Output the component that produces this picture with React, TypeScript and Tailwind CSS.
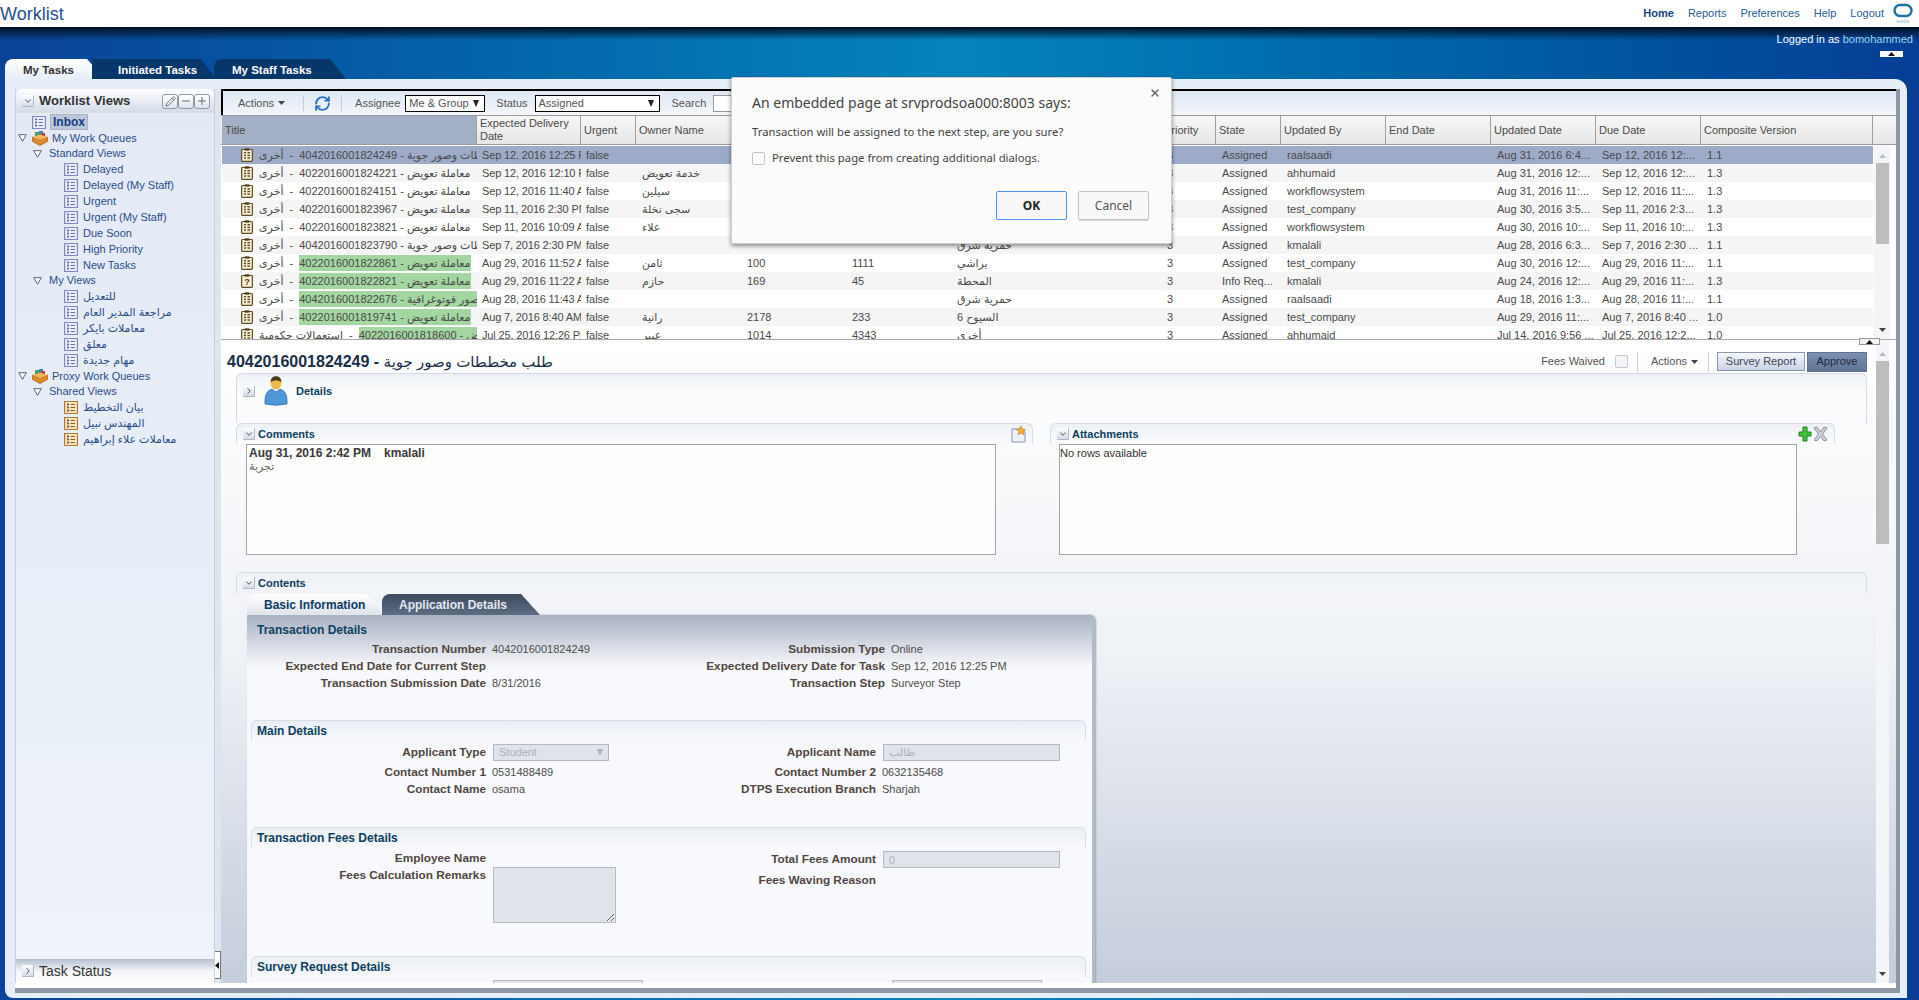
import { ChevronDown, ChevronRight, Minus, Pencil, Plus, RefreshCw, X } from 'lucide-react';

const ROW_GRID = 'grid grid-cols-[255px_104px_55px_105px_105px_105px_210px_55px_65px_105px_105px_105px_105px_172px]';
const SANS = "[font-family:'Liberation_Sans','DejaVu_Sans',sans-serif]";

const HEADERS = ['Title', 'Expected Delivery Date', 'Urgent', 'Owner Name', '', '', '', 'Priority', 'State', 'Updated By', 'End Date', 'Updated Date', 'Due Date', 'Composite Version'];

const OTHER = 'أخرى';
const COMP = 'معاملة تعويض';
const PLAN = 'طلب مخططات وصور جوية';

type Row = {
    type?: string;
    number: string;
    name: string;
    green?: boolean;
    help?: boolean;
    delivery: string;
    owner?: string;
    plot?: string;
    sector?: string;
    area?: string;
    state?: string;
    by: string;
    updated: string;
    due: string;
    version: string;
};

const ROWS: Row[] = [
    { number: '4042016001824249', name: PLAN, delivery: 'Sep 12, 2016 12:25 PM', by: 'raalsaadi', updated: 'Aug 31, 2016 6:4...', due: 'Sep 12, 2016 12:...', version: '1.1' },
    { number: '4022016001824221', name: COMP, delivery: 'Sep 12, 2016 12:10 PM', owner: 'خدمة تعويض', by: 'ahhumaid', updated: 'Aug 31, 2016 12:...', due: 'Sep 12, 2016 12:...', version: '1.3' },
    { number: '4022016001824151', name: COMP, delivery: 'Sep 12, 2016 11:40 AM', owner: 'سيلين', by: 'workflowsystem', updated: 'Aug 31, 2016 11:...', due: 'Sep 12, 2016 11:...', version: '1.3' },
    { number: '4022016001823967', name: COMP, delivery: 'Sep 11, 2016 2:30 PM', owner: 'سجى نخلة', by: 'test_company', updated: 'Aug 30, 2016 3:5...', due: 'Sep 11, 2016 2:3...', version: '1.3' },
    { number: '4022016001823821', name: COMP, delivery: 'Sep 11, 2016 10:09 AM', owner: 'علاء', by: 'workflowsystem', updated: 'Aug 30, 2016 10:...', due: 'Sep 11, 2016 10:...', version: '1.3' },
    { number: '4042016001823790', name: PLAN, delivery: 'Sep 7, 2016 2:30 PM', area: 'حمرية شرق', by: 'kmalali', updated: 'Aug 28, 2016 6:3...', due: 'Sep 7, 2016 2:30 ...', version: '1.1' },
    { number: '4022016001822861', name: COMP, green: true, delivery: 'Aug 29, 2016 11:52 AM', owner: 'ثامن', plot: '100', sector: '1111', area: 'براشي', by: 'test_company', updated: 'Aug 30, 2016 12:...', due: 'Aug 29, 2016 11:...', version: '1.1' },
    { number: '4022016001822821', name: COMP, green: true, help: true, delivery: 'Aug 29, 2016 11:22 AM', owner: 'حازم', plot: '169', sector: '45', area: 'المحطة', state: 'Info Req...', by: 'kmalali', updated: 'Aug 24, 2016 12:...', due: 'Aug 29, 2016 11:...', version: '1.3' },
    { number: '4042016001822676', name: 'صور فوتوغرافية', green: true, delivery: 'Aug 28, 2016 11:43 AM', area: 'حمرية شرق', by: 'raalsaadi', updated: 'Aug 18, 2016 1:3...', due: 'Aug 28, 2016 11:...', version: '1.1' },
    { number: '4022016001819741', name: COMP, green: true, delivery: 'Aug 7, 2016 8:40 AM', owner: 'رانية', plot: '2178', sector: '233', area: 'السيوح 6', by: 'test_company', updated: 'Aug 29, 2016 11:...', due: 'Aug 7, 2016 8:40 ...', version: '1.0' },
    { type: 'استعمالات حكومية', number: '4022016001818600', name: COMP, green: true, delivery: 'Jul 25, 2016 12:26 PM', owner: 'عبير', plot: '1014', sector: '4343', area: 'أخرى', by: 'ahhumaid', updated: 'Jul 14, 2016 9:56 ...', due: 'Jul 25, 2016 12:2...', version: '1.0' },
];

function ListIcon({ tan = false }: { tan?: boolean }) {
    const line = tan ? '#7a4a14' : '#5a5fa8';
    return (
        <svg width="14" height="13" viewBox="0 0 14 15" preserveAspectRatio="none" className="shrink-0">
            <rect x="0.6" y="0.6" width="12.8" height="13.8" fill={tan ? '#f8e6c6' : '#eef0fb'} stroke={tan ? '#b47a36' : '#8286c4'} strokeWidth="1.2" />
            {[4, 7.5, 11].map((y) => (
                <g key={y}>
                    <rect x="3" y={y - 1} width="2" height="2" fill={line} />
                    <line x1="6.5" x2="11" y1={y} y2={y} stroke={line} />
                </g>
            ))}
        </svg>
    );
}

function ClipIcon({ help = false }: { help?: boolean }) {
    return (
        <svg width="12" height="14" viewBox="0 0 13 16" preserveAspectRatio="none" className="shrink-0">
            <rect x="0.7" y="1.7" width="11.6" height="13.6" rx="1" fill="#f9f1d8" stroke="#5c4a1c" strokeWidth="1.3" />
            <rect x="4" y="0.4" width="5" height="2.6" fill="#4a3c18" />
            {help ? (
                <text x="6.5" y="13" textAnchor="middle" fontSize="10" fontWeight="700" fill="#5c3a10" fontFamily="Liberation Sans">?</text>
            ) : (
                [5.5, 8.5, 11.5].map((y) => (
                    <g key={y}>
                        <rect x="3.2" y={y - 0.8} width="2.2" height="1.6" fill="#5c4a1c" />
                        <rect x="7" y={y - 0.8} width="2.8" height="1.6" fill="#5c4a1c" />
                    </g>
                ))
            )}
        </svg>
    );
}

function QueueIcon() {
    return (
        <svg width="16" height="15" viewBox="0 0 16 15" className="shrink-0">
            <rect x="3" y="1" width="4" height="4" fill="#4aa34a" />
            <rect x="7" y="0" width="4" height="5" fill="#4a7bc0" />
            <rect x="10" y="2" width="3" height="4" fill="#c9382c" />
            <path d="M0.5 6 L8 9 L15.5 6 L15.5 10.5 L8 14.5 L0.5 10.5 Z" fill="#e08a2a" stroke="#a85c12" strokeWidth="0.7" />
            <path d="M0.5 6 L8 3.5 L15.5 6 L8 9 Z" fill="#f3b45c" />
        </svg>
    );
}

function TreeArrow() {
    return (
        <svg width="9" height="8" viewBox="0 0 9 8" className="shrink-0">
            <path d="M0.7 0.7 H8.3 L4.5 7.3 Z" fill="#fff" stroke="#5c6470" />
        </svg>
    );
}

function Disclosure({ open = true }: { open?: boolean }) {
    return (
        <span className="flex h-[12px] w-[12px] shrink-0 items-center justify-center rounded-[1px] border-b border-r border-[#aeb7c6] bg-gradient-to-b from-white to-[#d5dce8]">
            {open ? <ChevronDown size={10} strokeWidth={2} color="#333" /> : <ChevronRight size={10} strokeWidth={2} color="#333" />}
        </span>
    );
}

function PersonIcon() {
    return (
        <svg width="26" height="30" viewBox="0 0 26 30" className="shrink-0">
            <ellipse cx="13" cy="7" rx="5.5" ry="6.5" fill="#e9b94a" />
            <path d="M7.5 6 Q8 0.3 13 0.3 Q18 0.3 18.5 6 Q13 2.5 7.5 6 Z" fill="#4a3a1a" />
            <path d="M2 28 Q1 15 9 13 L13 16 L17 13 Q25 15 24 28 Q13 30.5 2 28 Z" fill="#4d97d8" stroke="#2d6aa8" strokeWidth="0.7" />
        </svg>
    );
}

function SelectBox({ label, className }: { label: string; className: string }) {
    return (
        <div className={`flex h-[17px] items-center justify-between border border-black bg-white pl-[3px] pr-[5px] ${className}`}>
            <span className="text-[#555]">{label}</span>
            <svg width="6" height="7" viewBox="0 0 6 7"><path d="M0 0 H6 L3 7 Z" fill="#222" /></svg>
        </div>
    );
}

function TreeItem({ label, tan = false }: { label: string; tan?: boolean }) {
    return (
        <div className="flex h-4 items-center gap-[5px] pl-[48px] text-[#2b4c86]">
            <ListIcon tan={tan} />
            <span>{label}</span>
        </div>
    );
}

function TreeGroup({ label, indent }: { label: string; indent: string }) {
    return (
        <div className={`flex h-[15px] items-center gap-[7px] text-[#2b4c86] ${indent}`}>
            <TreeArrow />
            <span>{label}</span>
        </div>
    );
}

function TreeQueue({ label }: { label: string }) {
    return (
        <div className="flex h-4 items-center pl-[2px] text-[#2b4c86]">
            <TreeArrow />
            <span className="ml-[5px]"><QueueIcon /></span>
            <span className="ml-[4px]">{label}</span>
        </div>
    );
}

function Sidebar() {
    return (
        <aside className="flex w-[200px] shrink-0 flex-col border-x border-[#c5cfde] bg-gradient-to-b from-[#e3eaf6] to-[#eef3f9]">
            <div className="flex h-[24px] shrink-0 items-center rounded-t-md bg-gradient-to-b from-white to-[#d3dbe7] pl-[6px] pr-[4px]">
                <Disclosure />
                <span className="ml-[5px] text-[13px] font-bold text-[#333]">Worklist Views</span>
                <div className="ml-auto flex">
                    {[Pencil, Minus, Plus].map((Icon, i) => (
                        <span key={i} className="flex h-[15px] w-[16px] items-center justify-center rounded-[3px] border border-[#8f98a6] bg-gradient-to-b from-white to-[#dfe4ec]">
                            <Icon size={i === 0 ? 11 : 12} strokeWidth={2} color="#667" />
                        </span>
                    ))}
                </div>
            </div>
            <div className="min-h-0 flex-1 pt-px text-[11px]">
                <div className="flex h-4 items-center pl-[16px]">
                    <ListIcon />
                    <span className="ml-[4px] border border-[#aab4c4] bg-[#bcc7d9] px-[2px] text-[12px] font-bold leading-[14px] text-[#173c84]">Inbox</span>
                </div>
                <TreeQueue label="My Work Queues" />
                <TreeGroup label="Standard Views" indent="pl-[17px]" />
                {['Delayed', 'Delayed (My Staff)', 'Urgent', 'Urgent (My Staff)', 'Due Soon', 'High Priority', 'New Tasks'].map((l) => <TreeItem key={l} label={l} />)}
                <TreeGroup label="My Views" indent="pl-[17px]" />
                {['للتعديل', 'مراجعة المدير العام', 'معاملات بايكر', 'معلق', 'مهام جديدة'].map((l) => <TreeItem key={l} label={l} />)}
                <TreeQueue label="Proxy Work Queues" />
                <TreeGroup label="Shared Views" indent="pl-[17px]" />
                {['بيان التخطيط', 'المهندس نبيل', 'معاملات علاء إبراهيم'].map((l) => <TreeItem key={l} label={l} tan />)}
            </div>
            <div className="flex h-[24px] shrink-0 items-center bg-gradient-to-b from-[#b4bfce] via-[#f3f5f8] to-white pl-[6px]">
                <Disclosure open={false} />
                <span className="ml-[5px] text-[14px] text-[#333]">Task Status</span>
            </div>
        </aside>
    );
}

function TaskRow({ row, index }: { row: Row; index: number }) {
    const bg = index === 0 ? 'bg-[#9dabc9]' : index % 2 === 1 ? 'bg-[#f5f5f5]' : 'bg-white';
    const values = [row.owner, row.plot, row.sector, row.area, '3', row.state ?? 'Assigned', row.by, '', row.updated, row.due, row.version];
    return (
        <div className={`${ROW_GRID} h-[18px] shrink-0 items-center text-[#4a4a4a] ${bg}`}>
            <div className="flex items-center overflow-hidden whitespace-nowrap pl-[19px]">
                {row.help ? <ClipIcon help /> : <ClipIcon />}
                <span className="ml-[6px] shrink-0">{row.type ?? OTHER}</span>
                <span className="mx-[6px] shrink-0">-</span>
                <span dir="ltr" className={`shrink-0 ${row.green ? 'bg-[#a3d6a0]' : ''}`}>{row.number} - {row.name}</span>
            </div>
            <div className="overflow-hidden whitespace-nowrap pl-[5px] tracking-[-0.15px]">{row.delivery}</div>
            <div className="pl-[5px]">false</div>
            {values.map((v, i) => (
                <div key={i} className="overflow-hidden whitespace-nowrap pl-[6px]">{v}</div>
            ))}
        </div>
    );
}

function TaskTable() {
    return (
        <section className="relative flex h-[251px] shrink-0 flex-col overflow-hidden border-b border-[#aaa] bg-white">
            <div className="flex h-[26px] shrink-0 items-center border-l-2 border-t-2 border-black bg-gradient-to-b from-[#dfe8f4] to-[#f3f6fa] pl-[15px] text-[#555]">
                <span>Actions</span>
                <svg width="7" height="4" viewBox="0 0 7 4" className="ml-[4px]"><path d="M0 0 H7 L3.5 4 Z" fill="#444" /></svg>
                <span className="ml-[18px] h-[16px] w-px bg-[#c4ccd8]" />
                <RefreshCw size={17} strokeWidth={2.6} color="#2f6fc4" className="ml-[10px]" />
                <span className="ml-[10px] h-[16px] w-px bg-[#c4ccd8]" />
                <span className="ml-[13px]">Assignee</span>
                <SelectBox label="Me & Group" className="ml-[5px] w-[80px]" />
                <span className="ml-[11px]">Status</span>
                <SelectBox label="Assigned" className="ml-[7px] w-[125px]" />
                <span className="ml-[12px]">Search</span>
                <div className="ml-[7px] h-[17px] w-[60px] border border-[#999] bg-white" />
            </div>
            <div className={`${ROW_GRID} h-[30px] shrink-0 border-y border-[#9a9a9a] bg-gradient-to-b from-[#f7f7f7] to-[#e6e6e6] pl-px text-[#4a4a4a]`}>
                {HEADERS.map((h, i) => (
                    <div key={i} className={`flex items-center overflow-hidden border-r border-[#a0a0a0] px-[3px] leading-[13px] ${i === 0 ? 'bg-[#a3afc5]' : ''}`}>{h}</div>
                ))}
            </div>
            <div className="flex min-h-0 flex-1 pt-px">
                <div className="min-w-0 flex-1 pl-px">
                    <div className="w-[1651px]">
                        {ROWS.map((r, i) => <TaskRow key={r.number} row={r} index={i} />)}
                    </div>
                </div>
                <div className="mr-[6px] flex w-[16px] shrink-0 flex-col items-center bg-[#f3f4f6] pt-[8px]">
                    <svg width="7" height="4" viewBox="0 0 7 4"><path d="M3.5 0 L7 4 H0 Z" fill="#bbb" /></svg>
                    <div className="mt-[5px] h-[81px] w-[13px] bg-[#bdbdbd]" />
                    <svg width="7" height="4" viewBox="0 0 7 4" className="mt-auto mb-[7px]"><path d="M0 0 H7 L3.5 4 Z" fill="#444" /></svg>
                </div>
            </div>
        </section>
    );
}

function SectionHead({ title, className = '', children }: { title: string; className?: string; children?: React.ReactNode }) {
    return (
        <div className={`flex h-[21px] items-center gap-[3px] rounded-t-md border-x border-t border-[#d6dce6] bg-gradient-to-b from-[#edf1f6] to-white/0 pl-[6px] text-[11px] font-bold text-[#0d3f5f] ${className}`}>
            <Disclosure />
            <span>{title}</span>
            {children}
        </div>
    );
}

function Field({ label, value, labelWidth, children }: { label: string; value?: string; labelWidth: string; children?: React.ReactNode }) {
    return (
        <div className="flex min-h-[17px] items-start">
            <div className={`shrink-0 text-right text-[11.8px] font-bold leading-[17px] text-[#50463f] ${labelWidth}`}>{label}</div>
            <div className="ml-[6px] leading-[16px] text-[#4d4d4d]">{value}{children}</div>
        </div>
    );
}

function FormSection({ title }: { title: string }) {
    return (
        <div className="flex h-[21px] items-center rounded-t-md border-x border-t border-[#d8dde6] bg-gradient-to-b from-[#eaeef4] to-white/0 pl-[5px] text-[12px] font-bold text-[#0d3f5f]">
            {title}
        </div>
    );
}

const INPUT = 'ml-px block border border-[#b4b9c3] bg-[#e0e3ea] px-[5px] text-[11px] text-[#aab0ba]';

function ApplicationForm() {
    return (
        <div className="ml-[11px] w-[848px] rounded-tr-md border-r-[3px] border-[#b3bbc8] bg-[#f8f9fc] shadow-[1px_0_2px_#9aa3b0]">
            <div className="h-[105px] bg-gradient-to-b from-[#a9b2c3] to-[#f8f9fc] to-50% pl-[4px] pt-[4px]">
                <div className="flex h-[22px] items-center pl-[6px] text-[12px] font-bold text-[#0d3f5f]">Transaction Details</div>
                <div className="flex">
                    <div className="w-[420px]">
                        <Field labelWidth="w-[235px]" label="Transaction Number" value="4042016001824249" />
                        <Field labelWidth="w-[235px]" label="Expected End Date for Current Step" />
                        <Field labelWidth="w-[235px]" label="Transaction Submission Date" value="8/31/2016" />
                    </div>
                    <div>
                        <Field labelWidth="w-[214px]" label="Submission Type" value="Online" />
                        <Field labelWidth="w-[214px]" label="Expected Delivery Date for Task" value="Sep 12, 2016 12:25 PM" />
                        <Field labelWidth="w-[214px]" label="Transaction Step" value="Surveyor Step" />
                    </div>
                </div>
            </div>
            <div className="h-[107px] pl-[4px] pr-[6px]">
                <FormSection title="Main Details" />
                <div className="flex pt-[3px]">
                    <div className="w-[420px]">
                        <Field labelWidth="w-[235px]" label="Applicant Type">
                            <div className={`${INPUT} flex h-[17px] w-[116px] items-center justify-between leading-[15px]`}>
                                <span>Student</span>
                                <svg width="6" height="7" viewBox="0 0 6 7"><path d="M0 0 H6 L3 7 Z" fill="#aab0ba" /></svg>
                            </div>
                        </Field>
                        <div className="h-[3px]" />
                        <Field labelWidth="w-[235px]" label="Contact Number 1" value="0531488489" />
                        <Field labelWidth="w-[235px]" label="Contact Name" value="osama" />
                    </div>
                    <div>
                        <Field labelWidth="w-[205px]" label="Applicant Name">
                            <input readOnly value="طالب" className={`${INPUT} h-[17px] w-[177px] outline-none`} />
                        </Field>
                        <div className="h-[3px]" />
                        <Field labelWidth="w-[205px]" label="Contact Number 2" value="0632135468" />
                        <Field labelWidth="w-[205px]" label="DTPS Execution Branch" value="Sharjah" />
                    </div>
                </div>
            </div>
            <div className="h-[129px] pl-[4px] pr-[6px]">
                <FormSection title="Transaction Fees Details" />
                <div className="flex pt-[2px]">
                    <div className="w-[420px]">
                        <Field labelWidth="w-[235px]" label="Employee Name" />
                        <Field labelWidth="w-[235px]" label="Fees Calculation Remarks">
                            <textarea disabled className={`${INPUT} h-[56px] w-[123px]`} />
                        </Field>
                    </div>
                    <div className="pt-px">
                        <Field labelWidth="w-[205px]" label="Total Fees Amount">
                            <input readOnly value="0" className={`${INPUT} h-[17px] w-[177px] outline-none`} />
                        </Field>
                        <div className="h-[4px]" />
                        <Field labelWidth="w-[205px]" label="Fees Waving Reason" />
                    </div>
                </div>
            </div>
            <div className="h-[60px] pl-[4px] pr-[6px]">
                <FormSection title="Survey Request Details" />
                <div className="flex pt-[3px]">
                    <div className="ml-[242px] h-[17px] w-[150px] border border-[#b4b9c3] bg-[#e0e3ea]" />
                    <div className="ml-[249px] h-[17px] w-[150px] border border-[#b4b9c3] bg-[#e0e3ea]" />
                </div>
            </div>
        </div>
    );
}

function DetailPane() {
    return (
        <section className="flex min-h-0 flex-1 bg-gradient-to-b from-white via-[#eef1f6] to-[#c5cddb]">
            <div className="min-w-0 flex-1 overflow-hidden">
                <div className="flex h-[33px] items-center justify-between pl-[6px] pr-[9px] pt-[10px]">
                    <h1 dir="ltr" className="text-[16px] font-bold text-[#1a2f47]">4042016001824249 - <span className="text-[15px] font-normal">{PLAN}</span></h1>
                    <div className="flex items-center text-[#555]">
                        <span>Fees Waived</span>
                        <input type="checkbox" readOnly className="ml-[10px] h-[13px] w-[13px] appearance-none rounded-[2px] border border-[#c4c9d2] bg-[#f4f5f7]" />
                        <span className="ml-[9px] h-[20px] w-px bg-[#c8d0dc]" />
                        <span className="ml-[13px]">Actions</span>
                        <svg width="7" height="4" viewBox="0 0 7 4" className="ml-[4px]"><path d="M0 0 H7 L3.5 4 Z" fill="#444" /></svg>
                        <span className="ml-[10px] h-[20px] w-px bg-[#c8d0dc]" />
                        <button className="ml-[8px] h-[19px] w-[88px] border border-[#8a97ad] bg-gradient-to-b from-[#f7f9fc] to-[#c8d3e4] text-[#445]">Survey Report</button>
                        <button className="ml-[2px] h-[20px] w-[60px] border border-[#5f7294] bg-gradient-to-b from-[#7d91b2] to-[#5f7396] text-[#1f2a3c]">Approve</button>
                    </div>
                </div>
                <div className="ml-[15px] mr-[9px] h-[50px] rounded-t-md border-x border-t border-[#d6dce6] bg-gradient-to-b from-[#edf1f6] to-white/0 to-40%">
                    <div className="flex items-center pl-[6px] pt-[2px]">
                        <Disclosure open={false} />
                        <span className="ml-[8px]"><PersonIcon /></span>
                        <span className="ml-[7px] font-bold text-[#0d3f5f]">Details</span>
                    </div>
                </div>
                <div className="ml-[15px] flex h-[149px] gap-[17px]">
                    <div className="w-[797px] shrink-0">
                        <SectionHead title="Comments">
                            <svg width="15" height="17" viewBox="0 0 15 17" className="ml-auto mr-[6px]">
                                <path d="M1 3 H10 L14 6 V16 H1 Z" fill="#eef0fb" stroke="#8c90b8" />
                                <path d="M10 0 L11.3 3 L14.5 3.5 L12 5.6 L12.8 8.8 L10 7 L7.2 8.8 L8 5.6 L5.5 3.5 L8.7 3 Z" fill="#f5b324" stroke="#c2571a" strokeWidth="0.5" />
                            </svg>
                        </SectionHead>
                        <div className="ml-[10px] h-[111px] w-[750px] border border-[#a6a6a6] bg-[#fdfdfb] px-[2px] pt-[1px] text-[11px]">
                            <div className="text-[12px] font-bold leading-[14px] text-[#3a3a3a]">Aug 31, 2016 2:42 PM<span className="ml-[13px]">kmalali</span></div>
                            <div className="leading-[13px] text-[#666]">تجربة</div>
                        </div>
                    </div>
                    <div className="w-[785px] shrink-0">
                        <SectionHead title="Attachments">
                            <div className="ml-auto mr-[6px] flex items-center gap-[1px]">
                                <svg width="14" height="16" viewBox="0 0 14 16">
                                    <path d="M5 1 H9 V6 H13 V10 H9 V15 H5 V10 H1 V6 H5 Z" fill="#3ec23a" stroke="#1f7f22" />
                                </svg>
                                <svg width="15" height="16" viewBox="0 0 15 16">
                                    <path d="M1 2 L4 1 L7.5 6 L11 1 L14 2 L9.5 8 L14 14 L11 15 L7.5 10 L4 15 L1 14 L5.5 8 Z" fill="#cdd1d7" stroke="#8d929b" />
                                </svg>
                            </div>
                        </SectionHead>
                        <div className="ml-[9px] h-[111px] w-[738px] border border-[#a6a6a6] bg-[#fdfdfb] text-[11px] font-normal text-[#333]">No rows available</div>
                    </div>
                </div>
                <div className="ml-[15px] mr-[9px]">
                    <SectionHead title="Contents" />
                    <div className="ml-[11px] mt-[1px] flex h-[21px] items-stretch text-[12px] font-bold">
                        <div className="flex w-[136px] items-center rounded-tl-lg bg-gradient-to-b from-white to-[#dfe3ea] pl-[17px] text-[#0c3a63] [clip-path:polygon(0_0,88%_0,100%_100%,0_100%)]">Basic Information</div>
                        <div className="-ml-[1px] flex w-[158px] items-center rounded-tl-lg bg-gradient-to-b from-[#3d4a60] to-[#5f6d83] pl-[17px] text-[#e3e8f0] [clip-path:polygon(0_0,88%_0,100%_100%,0_100%)]">Application Details</div>
                    </div>
                    <ApplicationForm />
                </div>
            </div>
            <div className="mr-[7px] flex w-[13px] shrink-0 flex-col items-center bg-[#f3f5f8] pt-[12px]">
                <svg width="7" height="4" viewBox="0 0 7 4"><path d="M3.5 0 L7 4 H0 Z" fill="#bbb" /></svg>
                <div className="mt-[5px] h-[183px] w-full bg-[#bdbdbd]" />
                <svg width="7" height="4" viewBox="0 0 7 4" className="mb-[7px] mt-auto"><path d="M0 0 H7 L3.5 4 Z" fill="#444" /></svg>
            </div>
        </section>
    );
}

function ConfirmDialog() {
    return (
        <div className="absolute left-[731px] top-[77px] h-[167px] w-[441px] rounded-[2px] border border-[#d0d0d0] bg-[#fbfbfb] pl-[20px] pt-[14px] text-[#444] shadow-[0_2px_4px_rgba(0,0,0,0.45)] [font-family:'Noto_Sans',sans-serif]">
            <X size={12} strokeWidth={3} color="#666" className="absolute right-[10px] top-[9px]" />
            <div className="text-[14px] leading-[21px]">An embedded page at srvprodsoa000:8003 says:</div>
            <div className="mt-[11px] text-[11.3px] leading-[16px]">Transaction will be assigned to the next step, are you sure?</div>
            <label className="mt-[10px] flex items-center gap-[7px] text-[11.3px] leading-[16px]">
                <input type="checkbox" readOnly className="h-[13px] w-[13px] appearance-none rounded-[2px] border border-[#c4c4c4] bg-white" />
                Prevent this page from creating additional dialogs.
            </label>
            <div className="absolute bottom-[23px] right-[22px] flex gap-[11px] text-[12px]">
                <button className="h-[29px] w-[71px] rounded-[2px] border border-[#4d90fe] bg-[#f8f8f8] font-bold text-[#222]">OK</button>
                <button className="h-[29px] w-[71px] rounded-[2px] border border-[#c4c4c4] bg-[#f8f8f8] text-[#555] shadow-[0_1px_1px_rgba(0,0,0,0.15)]">Cancel</button>
            </div>
        </div>
    );
}

export default function App() {
    return (
        <div className={`relative flex h-[1000px] flex-col overflow-hidden bg-gradient-to-r from-[#0a4297] via-[#0584bb] to-[#053e94] text-[11px] ${SANS}`}>
            <header className="flex h-[27px] shrink-0 items-center bg-white pr-[6px]">
                <span className="text-[18px] leading-[20px] text-[#1f4f8e]">Worklist</span>
                <nav className="ml-auto flex items-center gap-[14px] text-[#2a5d92]">
                    <a className="font-bold text-[#16457e]">Home</a>
                    <a>Reports</a>
                    <a>Preferences</a>
                    <a>Help</a>
                    <a>Logout</a>
                </nav>
                <svg width="20" height="22" viewBox="0 0 20 22" className="ml-[9px]">
                    <rect x="1.5" y="2" width="17" height="11" rx="5.5" fill="none" stroke="#1d6fa6" strokeWidth="2.4" />
                    <rect x="3" y="17" width="14" height="3" rx="1.5" fill="#cfe0ec" />
                </svg>
            </header>

            <div className="flex h-[52px] shrink-0 justify-between bg-gradient-to-b from-[#010e1e] to-transparent to-25% pl-[5px] pr-[6px]">
                <div className="flex items-end text-[11.5px] font-bold">
                    <div className="flex h-[20px] w-[100px] items-center rounded-tl-lg bg-gradient-to-b from-white to-[#e6eef8] pl-[18px] pt-[3px] text-[#333] [clip-path:polygon(0_0,82%_0,100%_100%,0_100%)]">My Tasks</div>
                    <div className="-ml-[13px] flex h-[20px] w-[124px] items-center bg-[#07366a] pl-[26px] pt-[3px] text-white [clip-path:polygon(0_0,88%_0,100%_100%,0_100%)]">Initiated Tasks</div>
                    <div className="-ml-[2px] flex h-[20px] w-[132px] items-center rounded-tl-lg bg-[#07366a] pl-[18px] pt-[3px] text-white [clip-path:polygon(0_0,88%_0,100%_100%,0_100%)]">My Staff Tasks</div>
                </div>
                <div className="flex flex-col items-end pt-[5px]">
                    <div className="leading-[14px] text-white">Logged in as <span className="text-[#9fd4ee]">bomohammed</span></div>
                    <div className="mr-[10px] mt-[5px] flex h-[6px] w-[23px] items-center justify-center bg-white">
                        <svg width="7" height="4" viewBox="0 0 7 4"><path d="M3.5 0 L7 4 H0 Z" fill="#111" /></svg>
                    </div>
                </div>
            </div>

            <main className="mb-[2px] ml-[5px] mr-[12px] flex min-h-0 flex-1 rounded-bl-lg rounded-tr-xl bg-[#e6eef8] pb-[5px] pl-[10px] pr-[7px] pt-[10px]">
                <div className="flex min-h-0 min-w-0 flex-1 overflow-hidden border-b-[5px] border-r-[4px] border-[#8d96a3] bg-white pb-[5px]">
                    <Sidebar />
                    <div className="relative w-[6px] shrink-0 bg-[#dfe5ee]">
                        <div className="absolute bottom-[4px] left-0 flex h-[28px] w-[6px] items-center border-y border-r border-[#777] bg-white">
                            <svg width="4" height="7" viewBox="0 0 4 7"><path d="M4 0 V7 L0 3.5 Z" fill="#111" /></svg>
                        </div>
                    </div>
                    <div className="flex min-h-0 min-w-0 flex-1 flex-col">
                        <TaskTable />
                        <DetailPane />
                    </div>
                </div>
            </main>

            <div className="absolute left-[1859px] top-[338px] flex h-[7px] w-[21px] items-center justify-center border border-[#999] bg-[#f2f2f2]">
                <svg width="7" height="4" viewBox="0 0 7 4"><path d="M3.5 0 L7 4 H0 Z" fill="#111" /></svg>
            </div>
            <ConfirmDialog />
        </div>
    );
}
